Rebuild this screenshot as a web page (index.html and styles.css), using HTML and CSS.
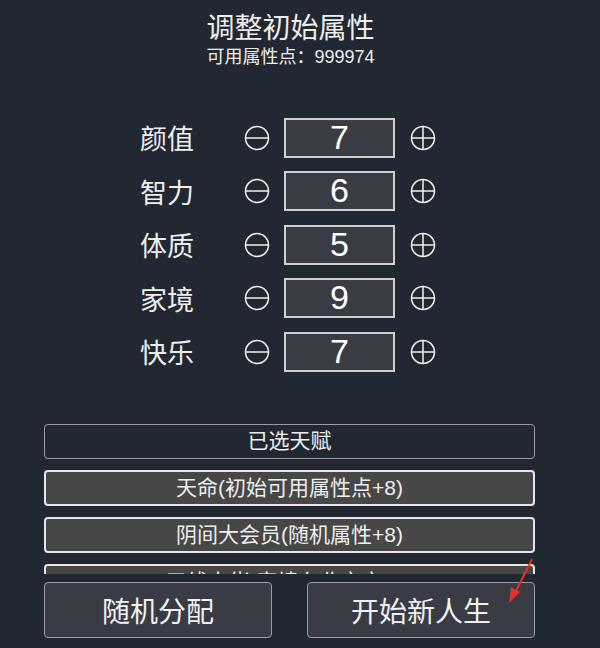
FILE: index.html
```html
<!DOCTYPE html>
<html>
<head>
    <meta charset="UTF-8">
    <meta name="viewport" content="width=device-width, initial-scale=1.0">
    <title>调整初始属性</title>
    <link rel="stylesheet" href="styles.css">
</head>
<body>
    <div class="page">
        <div class="header">
            <h1>调整初始属性</h1>
            <div class="points">可用属性点：999974</div>
        </div>

        <div class="props">
            <div class="prop">
                <span class="name">颜值</span>
                <svg class="btn" viewBox="0 0 26 26"><circle cx="13" cy="13" r="11.5"/><line x1="2" y1="13" x2="24" y2="13"/></svg>
                <div class="value">7</div>
                <svg class="btn" viewBox="0 0 26 26"><circle cx="13" cy="13" r="11.5"/><line x1="2" y1="13" x2="24" y2="13"/><line x1="13" y1="2" x2="13" y2="24"/></svg>
            </div>
            <div class="prop">
                <span class="name">智力</span>
                <svg class="btn" viewBox="0 0 26 26"><circle cx="13" cy="13" r="11.5"/><line x1="2" y1="13" x2="24" y2="13"/></svg>
                <div class="value">6</div>
                <svg class="btn" viewBox="0 0 26 26"><circle cx="13" cy="13" r="11.5"/><line x1="2" y1="13" x2="24" y2="13"/><line x1="13" y1="2" x2="13" y2="24"/></svg>
            </div>
            <div class="prop">
                <span class="name">体质</span>
                <svg class="btn" viewBox="0 0 26 26"><circle cx="13" cy="13" r="11.5"/><line x1="2" y1="13" x2="24" y2="13"/></svg>
                <div class="value">5</div>
                <svg class="btn" viewBox="0 0 26 26"><circle cx="13" cy="13" r="11.5"/><line x1="2" y1="13" x2="24" y2="13"/><line x1="13" y1="2" x2="13" y2="24"/></svg>
            </div>
            <div class="prop">
                <span class="name">家境</span>
                <svg class="btn" viewBox="0 0 26 26"><circle cx="13" cy="13" r="11.5"/><line x1="2" y1="13" x2="24" y2="13"/></svg>
                <div class="value">9</div>
                <svg class="btn" viewBox="0 0 26 26"><circle cx="13" cy="13" r="11.5"/><line x1="2" y1="13" x2="24" y2="13"/><line x1="13" y1="2" x2="13" y2="24"/></svg>
            </div>
            <div class="prop">
                <span class="name">快乐</span>
                <svg class="btn" viewBox="0 0 26 26"><circle cx="13" cy="13" r="11.5"/><line x1="2" y1="13" x2="24" y2="13"/></svg>
                <div class="value">7</div>
                <svg class="btn" viewBox="0 0 26 26"><circle cx="13" cy="13" r="11.5"/><line x1="2" y1="13" x2="24" y2="13"/><line x1="13" y1="2" x2="13" y2="24"/></svg>
            </div>
        </div>

        <div class="talents">
            <div class="talent-head">已选天赋</div>
            <div class="talent">天命(初始可用属性点+8)</div>
            <div class="talent">阴间大会员(随机属性+8)</div>
            <div class="talent">三线大佬(家境在北京市+2)</div>
        </div>

        <div class="actions">
            <button>随机分配</button>
            <button>开始新人生</button>
        </div>

        <svg class="arrow" width="40" height="50" viewBox="0 0 40 50">
            <path d="M33 2 L16 36" stroke="#e8302a" stroke-width="2" fill="none"/>
            <path d="M10 46 L12 30 L21 35 Z" fill="#e8302a"/>
        </svg>
    </div>
</body>
</html>
```

FILE: styles.css
```css
body {
    margin: 0;
    background: #222831;
    color: #eeeeee;
    font-family: 'Liberation Sans', 'Noto Sans CJK SC', sans-serif;
}

.page {
    position: relative;
    width: 600px;
    height: 648px;
    overflow: hidden;
}

.header {
    width: 581px;
    text-align: center;
}

h1 {
    margin: 0;
    padding-top: 12px;
    font-size: 28px;
    font-weight: normal;
    line-height: 34px;
}

.points {
    font-size: 18px;
    line-height: 22px;
}

.props {
    padding: 43px 0 0 140px;
}

.prop {
    display: flex;
    align-items: center;
    height: 53.5px;
}

.name {
    width: 104px;
    font-size: 27px;
}

.btn {
    width: 26px;
    height: 26px;
    fill: none;
    stroke: #f2f2f2;
    stroke-width: 1.5;
}

.value {
    box-sizing: border-box;
    width: 111px;
    height: 40px;
    margin: 0 15px 0 14px;
    background: #393c44;
    border: 2px solid #cfcfcf;
    font-size: 34px;
    line-height: 34px;
    text-align: center;
    color: #ffffff;
}

.talents {
    margin: 45px 0 0 44px;
    width: 491px;
    height: 150px;
    overflow: hidden;
}

.talent-head,
.talent {
    box-sizing: border-box;
    height: 35px;
    border-radius: 4px;
    font-size: 21px;
    line-height: 31px;
    text-align: center;
}

.talent-head {
    border: 1px solid #9a9ca3;
}

.talent {
    height: 36px;
    margin-top: 11px;
    background: #474747;
    border: 2px solid #e6e6e6;
}

.actions {
    display: flex;
    justify-content: space-between;
    width: 491px;
    margin: 8px 0 0 44px;
}

.actions button {
    width: 228px;
    height: 56px;
    background: #393c44;
    border: 1px solid #9a9ca3;
    border-radius: 4px;
    color: #f2f2f2;
    font-family: 'Liberation Sans', 'Noto Sans CJK SC', sans-serif;
    font-size: 28px;
}

.arrow {
    position: absolute;
    left: 499px;
    top: 557px;
}
```
